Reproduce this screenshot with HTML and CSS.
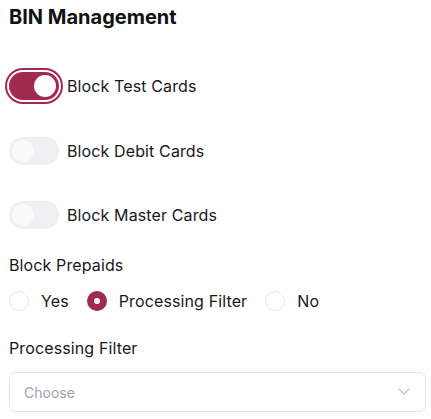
FILE: index.html
```html
<!DOCTYPE html>
<html lang="en">

<head>
    <meta charset="UTF-8">
    <meta name="viewport" content="width=device-width, initial-scale=1.0">
    <title>BIN Management</title>
    <link rel="stylesheet" href="styles.css">
</head>

<body>
    <div class="panel">
        <h1 class="title">BIN Management</h1>

        <!-- Toggles -->
        <div class="toggles">
            <label class="toggle-row">
                <input type="checkbox" class="switch switch-focus" checked>
                <span>Block Test Cards</span>
            </label>
            <label class="toggle-row">
                <input type="checkbox" class="switch">
                <span>Block Debit Cards</span>
            </label>
            <label class="toggle-row">
                <input type="checkbox" class="switch">
                <span>Block Master Cards</span>
            </label>
        </div>

        <!-- Prepaids -->
        <div class="field-label">Block Prepaids</div>
        <div class="radios">
            <label class="radio-opt">
                <input type="radio" name="prepaids" class="radio">
                <span>Yes</span>
            </label>
            <label class="radio-opt">
                <input type="radio" name="prepaids" class="radio" checked>
                <span>Processing Filter</span>
            </label>
            <label class="radio-opt">
                <input type="radio" name="prepaids" class="radio">
                <span>No</span>
            </label>
        </div>

        <!-- Processing filter select -->
        <div class="field-label filter-label">Processing Filter</div>
        <div class="select-wrap">
            <select class="select">
                <option>Choose</option>
            </select>
            <svg class="chevron" width="12" height="7" viewBox="0 0 12 7">
                <path d="M1 1l5 5 5-5" fill="none" stroke="#c8c8cc" stroke-width="1.2" stroke-linecap="round" stroke-linejoin="round"/>
            </svg>
        </div>
    </div>
</body>

</html>
```

FILE: styles.css
```css
body {
    font-family: Inter, "Noto Sans", sans-serif;
    background-color: #fff;
    color: #18181b;
    margin: 0;
}

.panel {
    padding: 2.5px 5px 0 9px;
}

.title {
    font-size: 20px;
    line-height: 28px;
    font-weight: 700;
    color: #111113;
    margin: 0 0 41.5px 0;
}

.toggles {
    display: flex;
    flex-direction: column;
    gap: 36.5px;
}

.toggle-row {
    display: flex;
    align-items: center;
    gap: 8px;
    font-size: 16px;
    line-height: 28px;
    letter-spacing: 0.12px;
}

.switch {
    appearance: none;
    margin: 0;
    width: 50px;
    height: 28px;
    border-radius: 14px;
    background-color: #f0f0f2;
    position: relative;
    flex-shrink: 0;
}

.switch::after {
    content: "";
    position: absolute;
    top: 3px;
    left: 3px;
    width: 22px;
    height: 22px;
    border-radius: 50%;
    background-color: #fafafa;
}

.switch:checked {
    background-color: #a1294f;
}

.switch:checked::after {
    left: 25px;
    background-color: #fff;
}

.switch-focus {
    box-shadow: 0 0 0 2px #fff, 0 0 0 4px #a1294f;
}

.field-label {
    font-size: 16px;
    line-height: 24px;
    letter-spacing: 0.12px;
    margin-top: 24px;
}

.radios {
    display: flex;
    align-items: center;
    gap: 18px;
    margin-top: 11.5px;
}

.radio-opt {
    display: flex;
    align-items: center;
    gap: 12px;
    font-size: 16px;
    line-height: 24px;
    letter-spacing: 0.12px;
}

.radio {
    appearance: none;
    margin: 0;
    width: 20px;
    height: 20px;
    border-radius: 50%;
    border: 1px solid #e4e4e7;
    background: #fff;
    box-sizing: border-box;
}

.radio:checked {
    border: 7px solid #a1294f;
}

.filter-label {
    margin-top: 23.5px;
}

.select-wrap {
    position: relative;
    margin-top: 12px;
}

.select {
    appearance: none;
    width: 100%;
    height: 40px;
    padding: 0 14px;
    border: 1px solid #e4e4e7;
    border-radius: 7px;
    background: #fff;
    font-family: Inter, "Noto Sans", sans-serif;
    font-size: 14px;
    color: #a1a1aa;
    outline: none;
}

.chevron {
    position: absolute;
    right: 16px;
    top: 16px;
    pointer-events: none;
}
```
